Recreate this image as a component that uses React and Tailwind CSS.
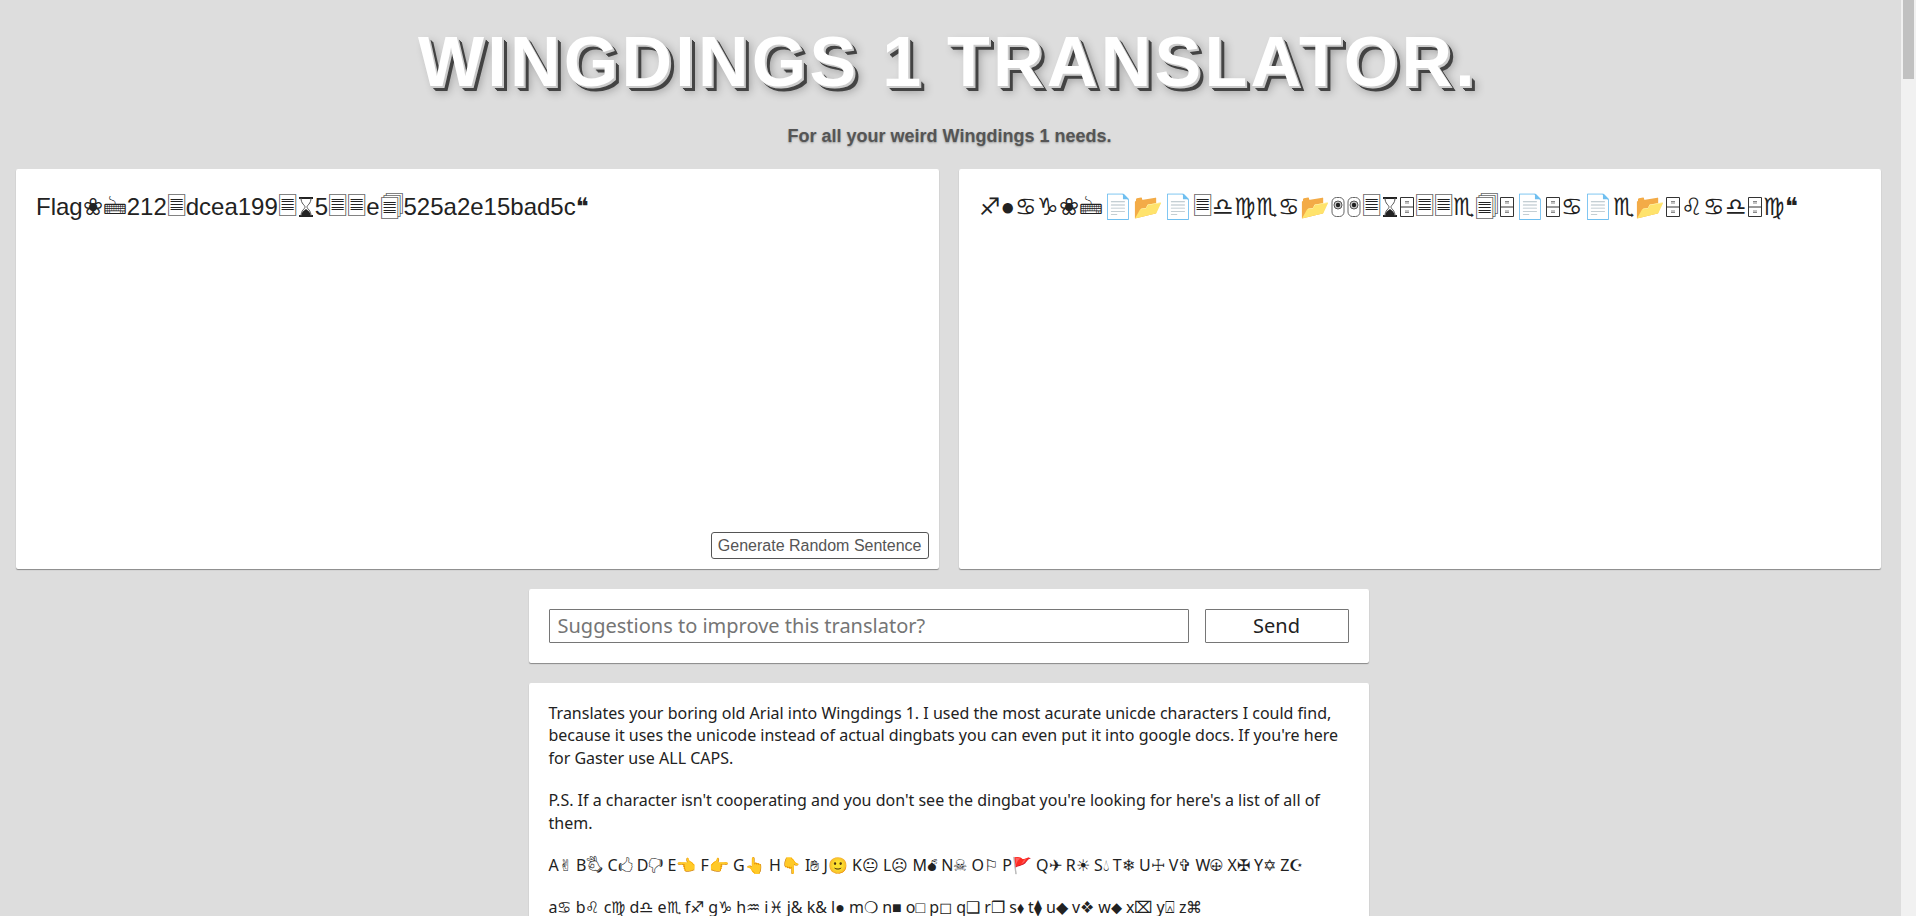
const VS = "\uFE0E";

// these three have no matching glyph in the installed fonts
const Cabinet = () => (
  <svg viewBox="0 0 16 20" className="inline-block w-4 h-5 align-[-2px]">
    <path d="M1.5 .5h13v19h-13zM1.5 10h13" fill="#fff" stroke="#333" />
    <path d="M6 4.5h4M6 6h4M6 14h4M6 15.500h4" stroke="#888" />
  </svg>
);

const Trackball = () => (
  <svg viewBox="0 0 16 20" className="inline-block w-4 h-5 align-[-2px]">
    <rect x="2" y=".5" width="12" height="19" rx="4.5" fill="#fff" stroke="#666" />
    <circle cx="8" cy="8" r="4" fill="#ccc" stroke="#555" />
    <circle cx="8" cy="8" r="2.2" fill="#222" />
  </svg>
);

const Hourglass = () => (
  <svg viewBox="1 0 18 20" className="inline-block w-[18px] h-5 align-[-2px]">
    <path d="M3 1h14M3 19h14" stroke="#222" strokeWidth="2" />
    <path d="M5 1c0 6 4 7 4 9s-4 3-4 9M15 1c0 6-4 7-4 9s4 3 4 9" fill="none" stroke="#555" />
    <path d="M5.5 18.500c0-4 3-5 4.500-6.500 1.500 1.500 4.500 2.500 4.500 6.500z" fill="#222" />
  </svg>
);

const UPPER_LIST = `A✌${VS} B🖏 C🖒 D🖓 E👈 F👉 G👆 H👇 I✋${VS} J🙂 K😐${VS} L☹${VS} M💣${VS} N☠${VS} O⚐ P🚩 Q✈${VS} R☀${VS} S💧${VS} T❄${VS} U☩ V✞ W🕀 X✠ Y✡${VS} Z☪${VS}`;
const LOWER_LIST = `a♋${VS} b♌${VS} c♍${VS} d♎${VS} e♏${VS} f♐${VS} g♑${VS} h♒${VS} i♓${VS} j& k& l● m❍ n■ o□ p◻${VS} q❑ r❒ s⬧ t⧫ u◆ v❖ w⬥ x⌧ y⍓ z⌘`;

const panel = "bg-white rounded-[2px] shadow-[0_1px_1px_#888]";

const TextPanel = ({ children }) => (
  <div className={`${panel} relative h-[400px] px-5 pt-[22px] text-[24px] leading-[32px] text-[#222] font-['Liberation_Sans',sans-serif]`}>
    {children}
  </div>
);

export default function App() {
  return (
    <div className="flex h-[916px] overflow-hidden bg-[#ddd] font-['Noto_Sans',sans-serif] text-[#222]">
      <div className="flex-1 min-w-0">
        <header className="pt-[22px] pr-[2px] text-center font-['Liberation_Sans',sans-serif] font-bold">
          <h1 className="pr-[3px] text-[70px] leading-[80px] tracking-[3.25px] text-white [text-shadow:1px_1px_0_#ccc,2px_2px_0_#ccc,3px_3px_0_#444,4px_4px_0_#444,5px_5px_0_#444,6px_6px_10px_rgba(0,0,0,0.3)]">
            WINGDINGS 1 TRANSLATOR.
          </h1>
          <p className="mt-[23px] text-[18px] leading-[22px] text-[#555] [text-shadow:0_1px_2px_rgba(0,0,0,0.3)]">
            For all your weird Wingdings 1 needs.
          </p>
        </header>

        <main className="mt-[22px] pl-4 pr-5">
          <div className="grid grid-cols-2 gap-5">
            <TextPanel>
              Flag❀🖮212🗏dcea199🗏
              <Hourglass />
              5🗏🗏e🗐525a2e15bad5c
              <span className="font-['DejaVu_Sans',sans-serif]">❝</span>
              <button className="absolute right-[10px] bottom-[10px] h-[27px] px-[6px] rounded-[3px] border border-[#555] bg-white text-[16px] leading-none text-[#555] font-['Liberation_Sans',sans-serif]">
                Generate Random Sentence
              </button>
            </TextPanel>
            <TextPanel>
              {`♐${VS}●♋${VS}♑${VS}❀🖮📄📂📄🗏♎${VS}♍${VS}♏${VS}♋${VS}📂`}
              <Trackball />
              <Trackball />
              🗏
              <Hourglass />
              <Cabinet />
              {`🗏🗏♏${VS}🗐`}
              <Cabinet />
              📄
              <Cabinet />
              {`♋${VS}📄♏${VS}📂`}
              <Cabinet />
              {`♌${VS}♋${VS}♎${VS}`}
              <Cabinet />
              {`♍${VS}❝`}
            </TextPanel>
          </div>

          <div className="mx-auto w-[840px] mt-5 flex flex-col gap-5">
            <form className={`${panel} flex gap-4 p-5`}>
              <input
                placeholder="Suggestions to improve this translator?"
                className="flex-1 h-[34px] px-2 pb-px border border-[#767676] rounded-[1px] text-[20px] outline-none placeholder:text-[#757575]"
              />
              <button type="button" className="w-[144px] h-[34px] border border-[#767676] rounded-[1px] bg-white text-[20px]">
                Send
              </button>
            </form>

            <section className={`${panel} px-5 py-[19px] text-[16px] leading-[22.4px]`}>
              <p>
                Translates your boring old Arial into Wingdings 1. I used the most acurate unicde characters I could find, because it uses the unicode instead of actual dingbats you can even put it into google docs. If you're here for Gaster use ALL CAPS.
              </p>
              <p className="mt-5">
                P.S. If a character isn't cooperating and you don't see the dingbat you're looking for here's a list of all of them.
              </p>
              <p className="mt-5">{UPPER_LIST}</p>
              <p className="mt-5">{LOWER_LIST}</p>
            </section>
          </div>
        </main>
      </div>

      <aside className="w-[15px] shrink-0 bg-[#f1f1f1] px-[2px]">
        <div className="h-[79px] bg-[#c1c1c1]" />
      </aside>
    </div>
  );
}
